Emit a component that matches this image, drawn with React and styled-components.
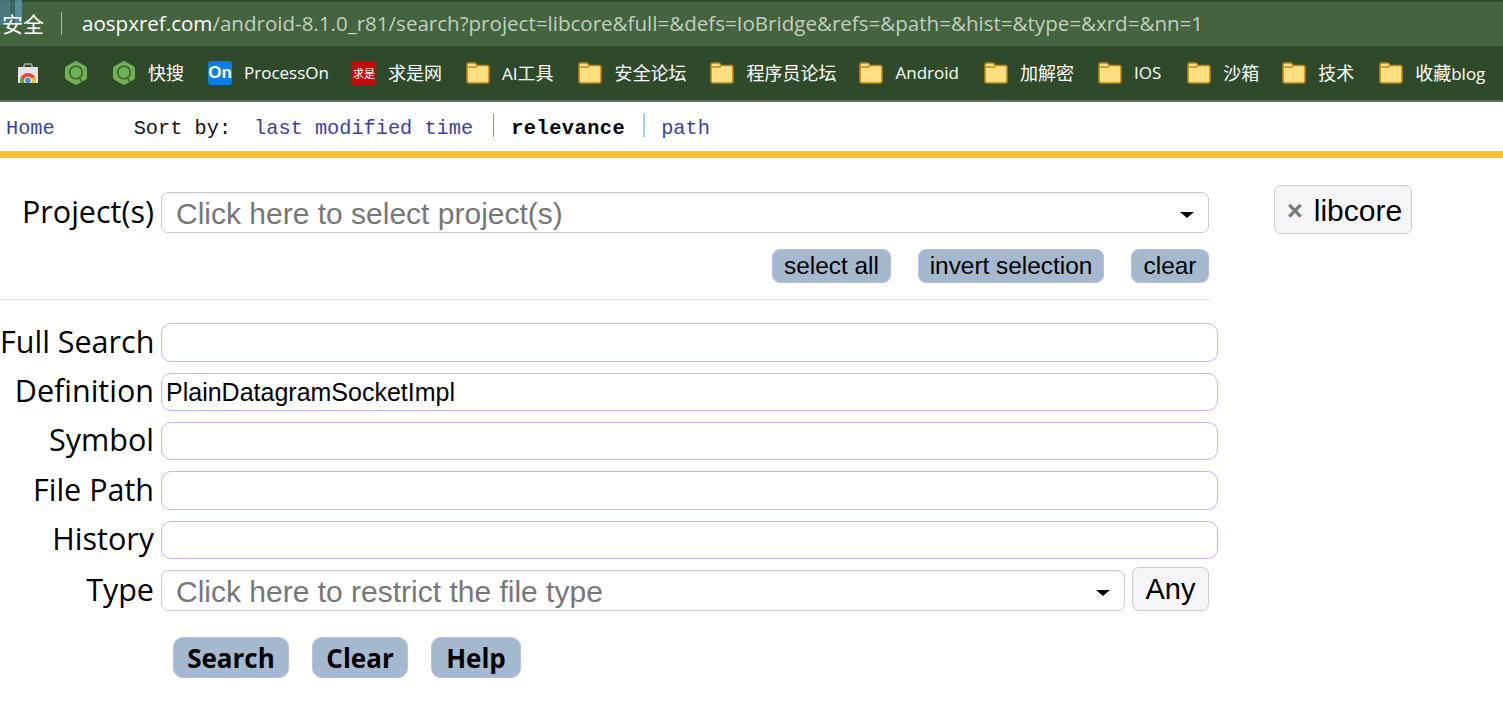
import React from "react";
import styled, { createGlobalStyle } from "styled-components";

const SANS = `"Liberation Sans", Arial, sans-serif`;
const UI = `"Open Sans", "Noto Sans CJK SC", sans-serif`;
const MONO = `"Liberation Mono", monospace`;

const GlobalStyle = createGlobalStyle`
  html, body {
    margin: 0;
    padding: 0;
    background: #fff;
  }
  body {
    font-family: ${SANS};
    overflow: hidden;
  }
  * {
    box-sizing: border-box;
  }
`;

function Folder() {
  return (
    <svg width="24" height="22" viewBox="0 0 24 22">
      <path
        d="M1 3C1 1.900 1.800 1 3 1h5.500c1 0 1.500.6 2 1.500l.5 1h10c1.100 0 2 .9 2 2V19c0 1.100-.9 2-2 2H3c-1.100 0-2-.9-2-2z"
        fill="#ffdf80"
        stroke="#b8861a"
        strokeWidth="1.600"
      />
      <path d="M1.500 5h9.500" stroke="#b8861a" strokeWidth="1.400" />
    </svg>
  );
}

function Hexagon() {
  return (
    <svg width="24" height="24" viewBox="0.500 0 23 24">
      <path
        d="M10.200 .7c1.100-.6 2.500-.6 3.600 0l7.400 4.200c1.100.6 1.800 1.800 1.800 3.100v8c0 1.300-.7 2.500-1.800 3.100l-7.400 4.200c-1.100.6-2.500.6-3.600 0l-7.400-4.200C1.700 18.500 1 17.300 1 16V8c0-1.300.7-2.500 1.800-3.100z"
        fill="#70b353"
      />
      <circle cx="12" cy="11.500" r="6.300" fill="none" stroke="#3f6a39" strokeWidth="1.800" />
      <path d="M15.500 17l2.800 4.200" stroke="#3f6a39" strokeWidth="1.800" />
    </svg>
  );
}

function StoreBag() {
  return (
    <svg width="20" height="20" viewBox="0 0 20 20">
      <path d="M6 5V2.500C6 1.500 6.800 1 7.500 1h5c.8 0 1.500.5 1.500 1.500V5" fill="none" stroke="#a9a9a9" strokeWidth="1.500" />
      <rect x="0" y="4" width="20" height="16" fill="#e4e4e4" />
      <path d="M2 20v-2a8 8 0 0 1 16 0v2z" fill="#e8453c" />
      <path d="M2 20v-2c0-1.500.4-2.900 1.200-4.100L8 20z" fill="#5aa845" />
      <path d="M18 20v-2c0-1.300-.3-2.500-.9-3.600L12 15.500l-1 4.500z" fill="#f5c33b" />
      <circle cx="10" cy="17.500" r="3.800" fill="#fff" />
      <circle cx="10" cy="17.500" r="2.800" fill="#4a8ee8" />
    </svg>
  );
}

const TopBar = styled.header`
  height: 46px;
  padding-bottom: 2px;
  background: #44633f;
  border-top: 2px solid #2f4a2b;
  display: flex;
  align-items: center;
  color: #c3cfc0;
  font-family: ${UI};
  font-size: 20.56px;
  white-space: nowrap;
  position: relative;
`;

const Secure = styled.span`
  color: #fff;
  font-size: 21px;
  width: 61px;
  padding-left: 2px;
  flex: none;
  position: relative;
`;

const BarDivider = styled.i`
  width: 1px;
  height: 23px;
  background: #a9b7a6;
  flex: none;
  margin-right: 20px;
`;

const Domain = styled.span`
  color: #fff;
`;

const WindowEdge = styled.div`
  position: absolute;
  left: 0;
  top: -2px;
  width: 22px;
  height: 25px;
  background: linear-gradient(90deg, #4f7f8f 0 45%, #3f6a6a 45% 70%, #5c9ab8 70% 100%);
  opacity: 0.75;
`;

const Bookmarks = styled.nav`
  height: 56px;
  background: #2f4a2b;
  border-bottom: 2px solid #62755e;
  display: flex;
  align-items: center;
  padding-left: 18px;
  color: #fff;
  font-family: ${UI};
  font-size: 17px;
  white-space: nowrap;
`;

const Bookmark = styled.a`
  display: flex;
  align-items: center;
  gap: 12px;
  margin-right: ${(p) => p.$gap}px;
  flex: none;
`;

const BookmarkLabel = styled.span`
  margin-top: -2px;
`;

const Han = styled.span`
  font-size: 18px;
`;

const OnLogo = styled.span`
  width: 24px;
  height: 24px;
  border-radius: 3px;
  background: #0b7de8;
  color: #fff;
  font: bold 17px ${SANS};
  display: flex;
  align-items: center;
  justify-content: center;
`;

const RedLogo = styled.span`
  width: 24px;
  height: 24px;
  background: #c40a0a;
  color: #fff;
  font: 11px "Noto Sans CJK SC", sans-serif;
  display: flex;
  align-items: center;
  justify-content: center;
`;

const SortBar = styled.div`
  height: 49px;
  padding: 3px 0 0 6px;
  display: flex;
  align-items: center;
  font-family: ${MONO};
  font-size: 20.3px;
  color: #111;
`;

const NavLink = styled.a`
  color: #3b3fa8;
`;

const SortLabel = styled.span`
  margin-left: 79px;
  margin-right: 23px;
`;

const SortItem = styled.span`
  color: ${(p) => (p.$active ? "#000" : "#3b3fa8")};
  font-weight: ${(p) => (p.$active ? "bold" : "normal")};
  letter-spacing: ${(p) => (p.$active ? "0.5px" : "0")};
`;

const SortSep = styled.i`
  width: ${(p) => p.$width}px;
  height: 24px;
  margin: ${(p) => p.$margin};
  background: ${(p) => p.$color};
  position: relative;
  top: -3px;
`;

const YellowRule = styled.div`
  height: 7px;
  background: #ffc527;
`;

const Page = styled.main`
  display: flex;
  align-items: flex-start;
`;

const SearchForm = styled.form`
  width: 1218px;
  padding-top: 34px;
  flex: none;
`;

const Row = styled.div`
  display: grid;
  grid-template-columns: 154px 1fr;
  column-gap: 7px;
  align-items: center;
  height: ${(p) => p.$height}px;
  margin-bottom: ${(p) => p.$after}px;
`;

const Label = styled.label`
  font-family: ${UI};
  font-size: 30.5px;
  line-height: 38px;
  color: #000;
  text-align: right;
  white-space: nowrap;
  margin-top: -4px;
`;

const Chooser = styled.div`
  height: 41px;
  border: 1px solid #ccc;
  border-radius: 7px;
  box-shadow: inset 0 3px 3px -2px rgba(0, 0, 0, 0.08);
  padding: 2px 14px 0 14px;
  display: flex;
  align-items: center;
  justify-content: space-between;
  font-size: 30px;
  color: #777;
  background: #fff;
  margin-right: ${(p) => p.$inset || 0}px;
  flex: 1;
  min-width: 0;
`;

const Caret = styled.i`
  width: 0;
  height: 0;
  border-left: 7px solid transparent;
  border-right: 7px solid transparent;
  border-top: 6px solid #000;
  margin-top: 3px;
`;

const TextField = styled.input`
  width: 100%;
  height: 100%;
  border: 1px solid #b9b9ff;
  border-radius: 10px;
  padding: 0 4px;
  font-family: ${SANS};
  font-size: 25px;
  color: #000;
  outline: none;
  background: #fff;
`;

const SmallActions = styled.div`
  width: 1209px;
  height: 34px;
  display: flex;
  justify-content: flex-end;
  gap: 27px;
  margin-top: 16px;
`;

const SmallButton = styled.button`
  height: 34px;
  width: ${(p) => p.$width}px;
  padding: 0;
  border: 1px solid #b5bcf0;
  border-radius: 8px;
  background: #a4b9cd;
  color: #000;
  font-family: ${SANS};
  font-size: 24.4px;
`;

const FormRule = styled.hr`
  width: 1210px;
  height: 1px;
  margin: 16px 0 23px;
  border: 0;
  background: #ddd;
`;

const TypeControls = styled.div`
  height: 41px;
  display: flex;
  align-items: center;
  gap: 7px;
  padding-right: 9px;
`;

const AnyTag = styled.span`
  height: 44px;
  width: 77px;
  flex: none;
  border: 1px solid #ccc;
  border-radius: 7px;
  background: #f5f5f8;
  padding-top: 1px;
  display: flex;
  align-items: center;
  justify-content: center;
  font-size: 29px;
  color: #000;
  margin-top: -4px;
`;

const MainActions = styled.div`
  display: flex;
  gap: 23px;
  margin: 26px 0 0 173px;
`;

const MainButton = styled.button`
  height: 41px;
  width: ${(p) => p.$width}px;
  padding: 0;
  border: 1px solid #b5bcf0;
  border-radius: 10px;
  background: #a4b9cd;
  color: #000;
  font-family: ${UI};
  font-weight: bold;
  font-size: 26px;
`;

const Selected = styled.aside`
  margin: 27px 0 0 56px;
`;

const ProjectTag = styled.span`
  height: 49px;
  width: 138px;
  border: 1px solid #ccc;
  border-radius: 7px;
  background: #f5f5f8;
  display: flex;
  align-items: center;
  gap: 11px;
  padding: 3px 0 0 12px;
  font-family: ${SANS};
  font-size: 30px;
  color: #000;
`;

const Remove = styled.b`
  color: #777;
  font-size: 27px;
  font-weight: bold;
`;

const BOOKMARKS = [
  { icon: <StoreBag />, gap: 26 },
  { icon: <Hexagon />, gap: 24 },
  { icon: <Hexagon />, label: <Han>快搜</Han>, gap: 24 },
  { icon: <OnLogo>On</OnLogo>, label: "ProcessOn", gap: 23 },
  { icon: <RedLogo>求是</RedLogo>, label: <Han>求是网</Han>, gap: 24 },
  { icon: <Folder />, label: <>AI<Han>工具</Han></>, gap: 25 },
  { icon: <Folder />, label: <Han>安全论坛</Han>, gap: 24 },
  { icon: <Folder />, label: <Han>程序员论坛</Han>, gap: 23 },
  { icon: <Folder />, label: "Android", gap: 25 },
  { icon: <Folder />, label: <Han>加解密</Han>, gap: 24 },
  { icon: <Folder />, label: "IOS", gap: 26 },
  { icon: <Folder />, label: <Han>沙箱</Han>, gap: 23 },
  { icon: <Folder />, label: <Han>技术</Han>, gap: 25 },
  { icon: <Folder />, label: <><Han>收藏</Han>blog</>, gap: 0 },
];

const FIELDS = [
  { label: "Full Search", value: "", height: 39 },
  { label: "Definition", value: "PlainDatagramSocketImpl", height: 38 },
  { label: "Symbol", value: "", height: 38 },
  { label: "File Path", value: "", height: 39 },
  { label: "History", value: "", height: 38 },
];

export default function App() {
  return (
    <>
      <GlobalStyle />
      <TopBar>
        <WindowEdge />
        <Secure>安全</Secure>
        <BarDivider />
        <span>
          <Domain>aospxref.com</Domain>
          /android-8.1.0_r81/search?project=libcore&amp;full=&amp;defs=IoBridge&amp;refs=&amp;path=&amp;hist=&amp;type=&amp;xrd=&amp;nn=1
        </span>
      </TopBar>
      <Bookmarks>
        {BOOKMARKS.map((b, i) => (
          <Bookmark key={i} $gap={b.gap}>
            {b.icon}
            {b.label && <BookmarkLabel>{b.label}</BookmarkLabel>}
          </Bookmark>
        ))}
      </Bookmarks>
      <SortBar>
        <NavLink>Home</NavLink>
        <SortLabel>Sort by:</SortLabel>
        <SortItem>last modified time</SortItem>
        <SortSep $color="#a09a80" $width={1} $margin="0 17px 0 20px" />
        <SortItem $active>relevance</SortItem>
        <SortSep $color="#9fd0f5" $width={2} $margin="0 16px 0 18px" />
        <SortItem>path</SortItem>
      </SortBar>
      <YellowRule />
      <Page>
        <SearchForm>
          <Row $height={41} $after={0}>
            <Label>Project(s)</Label>
            <Chooser $inset={9}>
              Click here to select project(s)
              <Caret />
            </Chooser>
          </Row>
          <SmallActions>
            <SmallButton type="button" $width={119}>select all</SmallButton>
            <SmallButton type="button" $width={186}>invert selection</SmallButton>
            <SmallButton type="button" $width={78}>clear</SmallButton>
          </SmallActions>
          <FormRule />
          {FIELDS.map((f) => (
            <Row key={f.label} $height={f.height} $after={11}>
              <Label>{f.label}</Label>
              <TextField defaultValue={f.value} />
            </Row>
          ))}
          <Row $height={41} $after={0}>
            <Label>Type</Label>
            <TypeControls>
              <Chooser>
                Click here to restrict the file type
                <Caret />
              </Chooser>
              <AnyTag>Any</AnyTag>
            </TypeControls>
          </Row>
          <MainActions>
            <MainButton type="button" $width={116}>Search</MainButton>
            <MainButton type="button" $width={96}>Clear</MainButton>
            <MainButton type="button" $width={90}>Help</MainButton>
          </MainActions>
        </SearchForm>
        <Selected>
          <ProjectTag>
            <Remove>×</Remove>
            libcore
          </ProjectTag>
        </Selected>
      </Page>
    </>
  );
}
